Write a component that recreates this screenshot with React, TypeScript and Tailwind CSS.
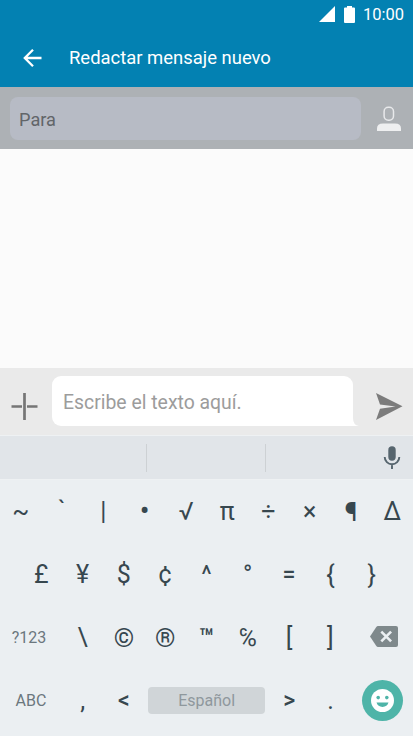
type KeyProps = { label: string; className?: string };

const topRow: KeyProps[] = [
  { label: "~" },
  { label: "`", className: "pb-[3px]" },
  { label: "|" },
  { label: "•", className: "text-[29px]" },
  { label: "√" },
  { label: "π" },
  { label: "÷" },
  { label: "×" },
  { label: "¶", className: "text-[26px]" },
  { label: "Δ" },
];

const secondRow: KeyProps[] = [
  { label: "£" },
  { label: "¥" },
  { label: "$" },
  { label: "¢" },
  { label: "^" },
  { label: "°" },
  { label: "=", className: "text-[23px] font-medium" },
  { label: "{" },
  { label: "}" },
];

const thirdRow: KeyProps[] = [
  { label: "\\" },
  { label: "©", className: "text-[26px]" },
  { label: "®", className: "text-[26px]" },
  { label: "™", className: "text-[25px] font-medium" },
  { label: "℅" },
  { label: "[" },
  { label: "]" },
];

function Key({ label, className = "text-[25px]" }: KeyProps) {
  return (
    <button className="flex h-full w-[41.3px] shrink-0 items-center justify-center text-[25px] text-[#37474f]">
      <span className={`leading-none ${className}`}>{label}</span>
    </button>
  );
}

function StatusBar() {
  return (
    <div className="flex h-7 items-center justify-end pr-[9px] text-white">
      <svg className="mr-[9px] h-4 w-4" viewBox="0 0 16 16" fill="currentColor">
        <path d="M16 0v16H0z" />
      </svg>
      <svg className="mr-2 h-[17px] w-[11px]" viewBox="0 0 11 17" fill="currentColor">
        <path d="M3 0h5v1.5h2q1 0 1 1V16q0 1-1 1H1q-1 0-1-1V2.500q0-1 1-1h2z" />
      </svg>
      <span className="pt-0.5 text-[16.500px] leading-7">10:00</span>
    </div>
  );
}

function AppBar() {
  return (
    <header className="flex h-[59px] items-center pl-[23px] text-white">
      <svg className="h-[18px] w-[19px] shrink-0" viewBox="0 0 19 18" fill="none" stroke="currentColor" strokeWidth="2.300">
        <path d="M18.500 9H1.500M10 .8 1.800 9l8.200 8.200" />
      </svg>
      <h1 className="ml-[27px] pt-0.5 text-[18.450px] leading-none whitespace-nowrap">Redactar mensaje nuevo</h1>
    </header>
  );
}

function Recipient() {
  return (
    <div className="flex h-[62px] items-center bg-[#adb1b5] pl-[10px]">
      <div className="flex h-[43px] w-[351px] items-center rounded-lg bg-[#b7bbc5] pt-[3px] pl-[9px] text-[18.200px] text-[#626569]">
        Para
      </div>
      <svg className="mt-0.5 ml-[15px] h-[26px] w-[26px]" viewBox="0 0 26 26">
        <rect x="8.100" y="1.200" width="9.400" height="13" rx="4.200" fill="none" stroke="#e8e9eb" strokeWidth="1.500" />
        <path d="M1 25v-2.500q0-5 6-5h12q6 0 6 5V25z" fill="#eeeff0" />
      </svg>
    </div>
  );
}

function Composer() {
  return (
    <div className="flex h-[67px] bg-[#eaeaea] pt-2">
      <svg className="mt-[17px] ml-[11px] h-[27px] w-[27px]" viewBox="0 0 27 27" stroke="#767676" strokeWidth="2.700">
        <path d="M13.500 0v27M.5 13.500H11M16 13.500h10.500" />
      </svg>
      <div className="relative ml-[14px] flex h-[50px] w-[301px] items-center rounded-t-[9px] rounded-bl-[9px] bg-white pt-[3px] pl-[11px] text-[19.400px] text-[#9c9c9c]">
        Escribe el texto aquí.
        <svg className="absolute bottom-0 left-full h-2 w-1.5" viewBox="0 0 6 8" fill="#fff">
          <path d="M0 0q0 7 6 8H0z" />
        </svg>
      </div>
      <svg className="mt-[17px] ml-[23px] h-[27px] w-[27px]" viewBox="0 0 27 27" fill="#7c7c7c">
        <path d="M0 0 26.500 13.300 0 27l4-11.300L19.500 13.400 4 11.500z" />
      </svg>
    </div>
  );
}

function Suggestions() {
  return (
    <div className="flex h-[45px] items-center border-y border-[#eef1f3] bg-[#e1e5e9]">
      <div className="h-7 w-[147px] border-r border-[#cdd1d4]" />
      <div className="h-7 w-[119px] border-r border-[#cdd1d4]" />
      <svg className="ml-[117px] h-[23px] w-[18px]" viewBox="0 0 18 23">
        <rect x="5.300" y=".3" width="7.400" height="14.500" rx="3.700" fill="#56656e" />
        <path d="M1.700 11a7.300 7.300 0 0 0 14.600 0M9 18v5" fill="none" stroke="#56656e" strokeWidth="1.900" />
      </svg>
    </div>
  );
}

function Keyboard() {
  return (
    <div className="flex h-[256px] flex-col bg-[#ebeff2]">
      <div className="flex h-[63px] justify-center">
        {topRow.map((k) => (
          <Key key={k.label} {...k} />
        ))}
      </div>
      <div className="flex h-[63px] justify-center">
        {secondRow.map((k) => (
          <Key key={k.label} {...k} />
        ))}
      </div>
      <div className="flex h-[63px]">
        <button className="w-[62px] shrink-0 pr-1 text-[16px] text-[#6b777e]">?123</button>
        {thirdRow.map((k) => (
          <Key key={k.label} {...k} />
        ))}
        <button className="flex w-[62px] items-center pb-0.5 pl-[19px]">
          <svg className="h-[21px] w-7" viewBox="0 0 28 21">
            <path d="M8 0h18q2 0 2 2v17q0 2-2 2H8q-1 0-1.700-1L0 10.500 6.300 1Q7 0 8 0z" fill="#7f898c" />
            <path d="m11.300 5.600 9.800 9.800m0-9.800-9.800 9.800" stroke="#ebeff2" strokeWidth="2.600" />
          </svg>
        </button>
      </div>
      <div className="flex h-[63px] items-center">
        <button className="w-[62px] shrink-0 text-[16px] text-[#6b777e]">ABC</button>
        <Key label="," />
        <Key label="<" className="text-[23px] font-medium" />
        <button className="mx-[3.500px] h-[27px] w-[117px] shrink-0 rounded bg-[#d0d5d8] text-[16px] text-[#8f989d]">
          Español
        </button>
        <Key label=">" className="text-[23px] font-medium" />
        <Key label="." />
        <button className="ml-[10.500px] flex h-[41px] w-[41px] shrink-0 items-center justify-center rounded-full bg-[#4eb4a8]">
          <svg className="h-[23px] w-[23px]" viewBox="0 0 23 23">
            <circle cx="11.500" cy="11.500" r="11.500" fill="#fff" />
            <circle cx="7.200" cy="8.600" r="1.800" fill="#4eb4a8" />
            <circle cx="15.800" cy="8.600" r="1.800" fill="#4eb4a8" />
            <path d="M5.500 13.500h12a6.300 6.300 0 0 1-12 0z" fill="#4eb4a8" />
          </svg>
        </button>
      </div>
    </div>
  );
}

export default function App() {
  return (
    <div className="flex h-[736px] w-[413px] flex-col overflow-hidden bg-[#fbfbfb] font-['Roboto','Noto_Sans',sans-serif]">
      <div className="bg-[#0381b2]">
        <StatusBar />
        <AppBar />
      </div>
      <Recipient />
      <main className="flex-1" />
      <Composer />
      <Suggestions />
      <Keyboard />
    </div>
  );
}
